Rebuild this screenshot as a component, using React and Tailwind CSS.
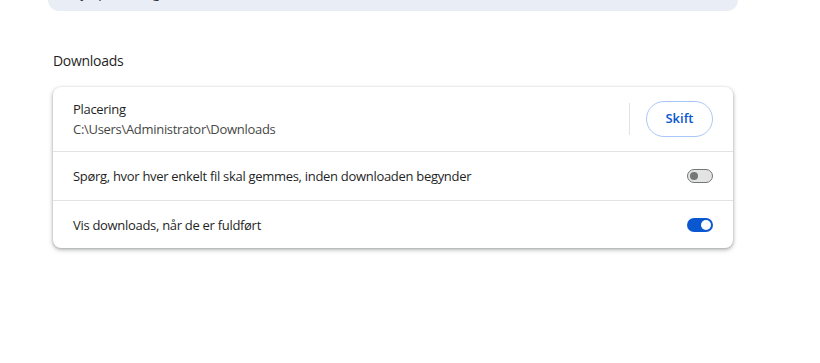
const Toggle = ({ on }) => {
  if (on) {
    return (
      <div className="w-[26px] h-[14px] rounded-full bg-[#0b57d0] flex items-center justify-end px-[2px]">
        <div className="w-[10px] h-[10px] rounded-full bg-white" />
      </div>
    );
  }
  return (
    <div className="w-[26px] h-[14px] rounded-full bg-[#e3e3e3] border border-[#747775] flex items-center px-[2px]">
      <div className="w-[8px] h-[8px] rounded-full bg-[#747775]" />
    </div>
  );
};

export default function App() {
  return (
    <div className="w-[820px] h-[363px] bg-white overflow-hidden font-['Open_Sans',sans-serif] text-[#1f1f1f] tracking-[-0.3px]">
      <div className="ml-[48px] w-[690px] h-[11px] bg-[#e9eef6] rounded-b-[12px] overflow-hidden relative">
        <div className="absolute left-[24px] top-[-15px] text-[13px] leading-[16px] text-[#1f1f1f] whitespace-nowrap">
          Hjælp med at gøre Chrome bedre
        </div>
      </div>

      <div className="ml-[53px] w-[680px]">
        <h2 className="mt-[40px] h-[20px] text-[14px] leading-[20px] font-normal">Downloads</h2>

        <div className="mt-[16px] bg-white rounded-[8px] shadow-[0_1px_3px_rgba(60,64,67,0.35),0_2px_4px_1px_rgba(60,64,67,0.18)]">
          <div className="h-[64px] flex items-center pl-[20px] pr-[20px]">
            <div className="flex-1 flex flex-col">
              <span className="text-[13px] leading-[20px]">Placering</span>
              <span className="text-[13px] leading-[20px] text-[#474747]">C:\Users\Administrator\Downloads</span>
            </div>
            <div className="w-px h-[32px] bg-[#e3e3e3] mr-[16px]" />
            <button className="w-[67px] h-[36px] rounded-full border border-[#a8c7fa] text-[#0b57d0] text-[13px] font-semibold tracking-normal">
              Skift
            </button>
          </div>

          <div className="h-[49px] border-t border-[#e3e3e3] flex items-center pl-[20px] pr-[20px]">
            <span className="flex-1 text-[13px] leading-[20px]">
              Spørg, hvor hver enkelt fil skal gemmes, inden downloaden begynder
            </span>
            <Toggle on={false} />
          </div>

          <div className="h-[48px] border-t border-[#e3e3e3] flex items-center pl-[20px] pr-[20px]">
            <span className="flex-1 text-[13px] leading-[20px]">Vis downloads, når de er fuldført</span>
            <Toggle on={true} />
          </div>
        </div>
      </div>
    </div>
  );
}
